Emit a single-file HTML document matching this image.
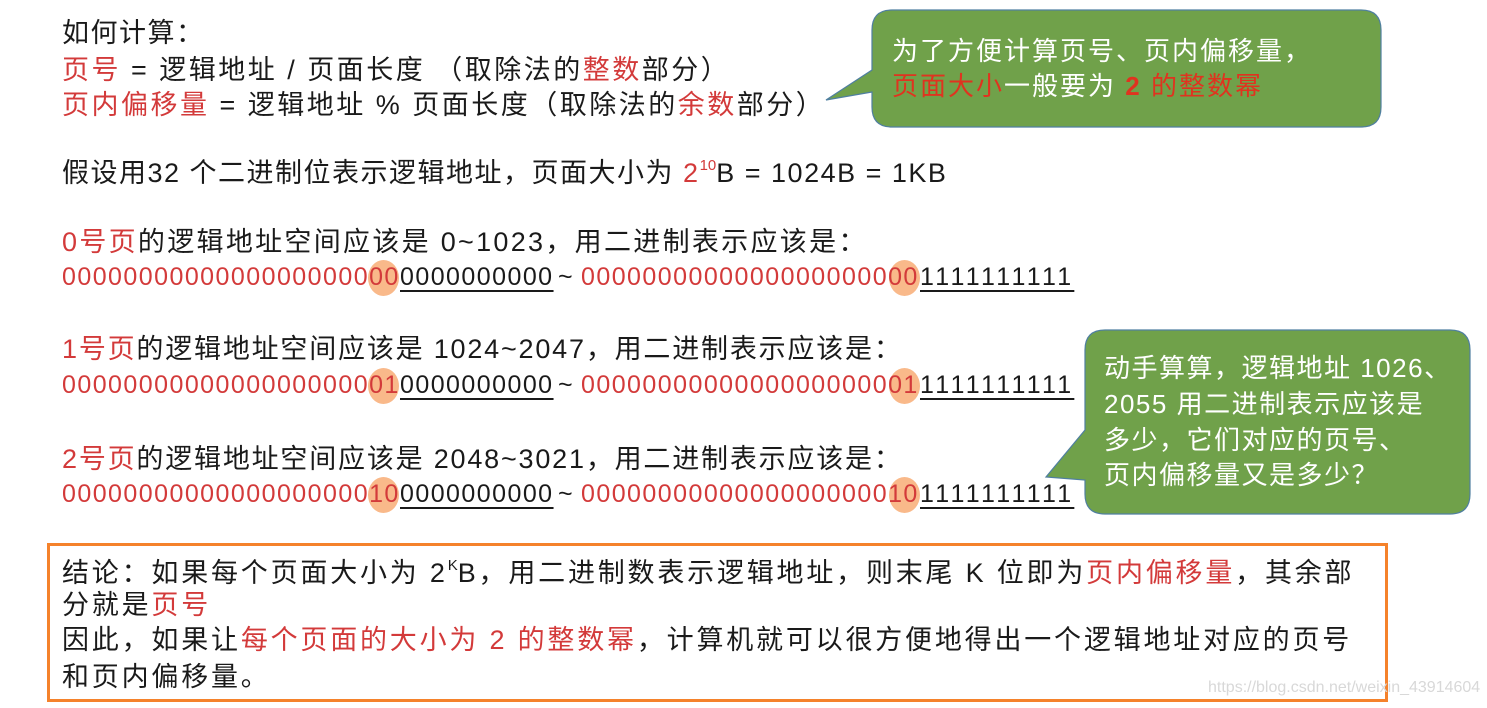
<!DOCTYPE html>
<html><head><meta charset="utf-8"><style>
*{margin:0;padding:0;box-sizing:border-box}
body{width:1487px;height:708px;background:#fff;position:relative;overflow:hidden;font-family:"Liberation Sans","Noto Sans CJK SC",sans-serif;color:#1a1a1a}
.l{position:absolute;left:62px;font-size:27px;line-height:36px;letter-spacing:1.5px;white-space:nowrap}
.r{color:#d33a3a}
.b{position:absolute;font-size:25px;line-height:36px;letter-spacing:1.45px;white-space:nowrap;font-family:"Liberation Sans",sans-serif}
.u{text-decoration:underline;text-decoration-thickness:2px;text-underline-offset:5px}
.o{letter-spacing:1.45px;width:153px}
.c{position:absolute;width:31px;height:36px;border-radius:50%;background:#f9b98a}
sup{font-size:15px;letter-spacing:0;position:relative;top:-2px}
.g{color:#fff;font-size:26px;line-height:36px;letter-spacing:2px;position:absolute;white-space:nowrap}
.box{position:absolute;left:47px;top:543px;width:1341px;height:159px;border:3px solid #f5822b}
.w{position:absolute;left:1208px;top:679px;font-size:16px;color:#d8d8d8;letter-spacing:0}
.bt{letter-spacing:2.8px}
</style></head><body>
<svg width="1487" height="708" style="position:absolute;left:0;top:0">
<path d="M892 10 H1361 Q1381 10 1381 30 V107 Q1381 127 1361 127 H892 Q872 127 872 107 V92 L826 100 L872 70 V30 Q872 10 892 10 Z" fill="#70a14a" stroke="#4f7fa0" stroke-width="1.2"/>
<path d="M1105 330 H1450 Q1470 330 1470 350 V494 Q1470 514 1450 514 H1105 Q1085 514 1085 494 V480 L1046 477 L1085 430 V350 Q1085 330 1105 330 Z" fill="#70a14a" stroke="#4f7fa0" stroke-width="1.2"/>
</svg>
<div class="l" style="top:15px">如何计算：</div>
<div class="l" style="top:52px;letter-spacing:2.5px"><span class="r">页号</span> = 逻辑地址 / 页面长度 （取除法的<span class="r">整数</span>部分）</div>
<div class="l" style="top:87px;letter-spacing:2.5px"><span class="r">页内偏移量</span> = 逻辑地址 % 页面长度（取除法的<span class="r">余数</span>部分）</div>
<div class="l" style="top:150px">假设用32 个二进制位表示逻辑地址，页面大小为 <span class="r">2</span><sup class="r">10</sup>B = 1024B = 1KB</div>

<div class="l" style="top:224px;letter-spacing:2.3px"><span class="r">0号页</span>的逻辑地址空间应该是 0~1023，用二进制表示应该是：</div>
<div class="l" style="top:331px;letter-spacing:1.8px"><span class="r">1号页</span>的逻辑地址空间应该是 1024~2047，用二进制表示应该是：</div>
<div class="l" style="top:441px;letter-spacing:1.8px"><span class="r">2号页</span>的逻辑地址空间应该是 2048~3021，用二进制表示应该是：</div>

<div class="c" style="left:368px;top:260px"></div><div class="c" style="left:889px;top:260px"></div>
<div class="c" style="left:368px;top:368px"></div><div class="c" style="left:889px;top:368px"></div>
<div class="c" style="left:368px;top:477px"></div><div class="c" style="left:889px;top:477px"></div>

<div class="b r" style="left:62px;top:259px">0000000000000000000000</div><div class="b u" style="left:400px;top:259px">0000000000</div><div class="b" style="left:558px;top:259px">~</div><div class="b r" style="left:581px;top:259px">0000000000000000000000</div><div class="b u" style="left:920px;top:259px;letter-spacing:3.2px">1111111111</div>
<div class="b r" style="left:62px;top:367px">0000000000000000000001</div><div class="b u" style="left:400px;top:367px">0000000000</div><div class="b" style="left:558px;top:367px">~</div><div class="b r" style="left:581px;top:367px">0000000000000000000001</div><div class="b u" style="left:920px;top:367px;letter-spacing:3.2px">1111111111</div>
<div class="b r" style="left:62px;top:476px">0000000000000000000010</div><div class="b u" style="left:400px;top:476px">0000000000</div><div class="b" style="left:558px;top:476px">~</div><div class="b r" style="left:581px;top:476px">0000000000000000000010</div><div class="b u" style="left:920px;top:476px;letter-spacing:3.2px">1111111111</div>

<div class="g" style="left:892px;top:33px">为了方便计算页号、页内偏移量，</div>
<div class="g" style="left:892px;top:68px"><span style="color:#e0331f">页面大小</span>一般要为 <b style="color:#e0331f">2</b> <span style="color:#e0331f">的整数幂</span></div>
<div class="g" style="left:1104px;top:350px;letter-spacing:1.5px">动手算算，逻辑地址 1026、</div>
<div class="g" style="left:1104px;top:386px;letter-spacing:1.5px">2055 用二进制表示应该是</div>
<div class="g" style="left:1104px;top:422px;letter-spacing:1.5px">多少，它们对应的页号、</div>
<div class="g" style="left:1104px;top:457px;letter-spacing:1.5px">页内偏移量又是多少？</div>

<div class="box"></div>
<div class="l bt" style="top:550px">结论：如果每个页面大小为 2<sup>K</sup>B，用二进制数表示逻辑地址，则末尾 K 位即为<span class="r">页内偏移量</span>，其余部</div>
<div class="l bt" style="top:587px">分就是<span class="r">页号</span></div>
<div class="l bt" style="top:622px">因此，如果让<span class="r">每个页面的大小为 2 的整数幂</span>，计算机就可以很方便地得出一个逻辑地址对应的页号</div>
<div class="l bt" style="top:659px">和页内偏移量。</div>
<div class="w">https://blog.csdn.net/weixin_43914604</div>
</body></html>
